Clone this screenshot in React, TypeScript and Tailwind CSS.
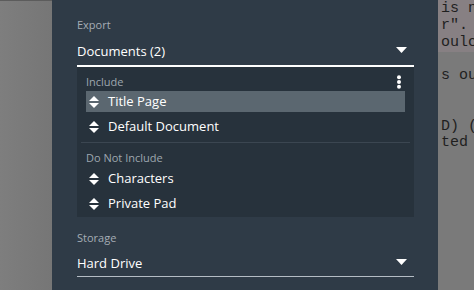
import React from "react";

const include = ["Title Page", "Default Document"];
const exclude = ["Characters", "Private Pad"];

const editorLines = ["is n", "r\".", "oulc", "", "s ou", "", "", "D) (", "ted"];

function SortIcon() {
  return (
    <svg width="10" height="12" viewBox="0 0 10 12" className="shrink-0">
      <path d="M5 0 L10 5 L0 5 Z" fill="#ffffff" />
      <path d="M0 7 L10 7 L5 12 Z" fill="#ffffff" />
    </svg>
  );
}

function Caret() {
  return (
    <svg width="11" height="6" viewBox="0 0 11 6">
      <path d="M0 0 L11 0 L5.5 6 Z" fill="#ffffff" />
    </svg>
  );
}

function DocRow({ name, active }: { name: string; active?: boolean }) {
  return (
    <div
      className={`flex items-center h-[21px] pl-[3px] gap-[9px] ${
        active ? "bg-[#5b6770]" : ""
      }`}
    >
      <SortIcon />
      <span className="text-[13px] text-white">{name}</span>
    </div>
  );
}

export default function App() {
  return (
    <div
      className="flex w-[474px] h-[290px] overflow-hidden bg-[#7b7b7b]"
      style={{ fontFamily: "'Open Sans', sans-serif" }}
    >
      {/* dimmed page behind */}
      <div className="w-[52px] shrink-0 bg-gradient-to-r from-[#7e7e7e] to-[#767676] border-t border-[#5c5c5c]" />

      {/* export panel */}
      <div className="w-[386px] shrink-0 bg-[#2f3b47] pl-[25px] pr-[24px] pt-[16px]">
        <div className="text-[11px] text-[#a5adb5] leading-[18px]">Export</div>
        <div className="flex items-center justify-between h-[33px] border-b-2 border-white pr-[7px]">
          <span className="text-[13px] text-white pt-[4px]">Documents (2)</span>
          <Caret />
        </div>

        <div className="bg-[#27323c] px-[9px] pb-[3px]">
          <div className="flex items-center justify-between h-[24px] pt-[6px]">
            <span className="text-[11px] text-[#9ea7af]">Include</span>
            <svg width="6" height="14" viewBox="0 0 6 14" className="mr-[3px]">
              <circle cx="3" cy="2.2" r="2" fill="#ffffff" />
              <circle cx="3" cy="7" r="2" fill="#ffffff" />
              <circle cx="3" cy="11.8" r="2" fill="#ffffff" />
            </svg>
          </div>
          <div className="flex flex-col gap-[4px]">
            {include.map((d, i) => (
              <DocRow key={d} name={d} active={i === 0} />
            ))}
          </div>
          <div className="mx-[-5px] mt-[5px] border-t border-[#3b4651]" />
          <div className="text-[11px] text-[#9ea7af] h-[25px] flex items-center pt-[5px]">
            Do Not Include
          </div>
          <div className="flex flex-col gap-[4px]">
            {exclude.map((d) => (
              <DocRow key={d} name={d} />
            ))}
          </div>
        </div>

        <div className="text-[11px] text-[#a5adb5] leading-[18px] mt-[12px]">Storage</div>
        <div className="flex items-center justify-between h-[30px] border-b border-[#b4bcc4] pr-[7px]">
          <span className="text-[13px] text-white pt-[4px]">Hard Drive</span>
          <Caret />
        </div>
      </div>

      {/* editor text peeking on the right */}
      <div className="flex-1 overflow-hidden bg-[#7a7a7a] relative">
        <div className="h-[52px] bg-[#878083]" />
        <div
          className="absolute top-[1px] left-[3px] whitespace-pre text-[15px] leading-[16.8px] text-[#1f1f1f]"
          style={{ fontFamily: "'Liberation Mono', monospace" }}
        >
          {editorLines.map((l, i) => (
            <div key={i} className="h-[16.8px]">
              {l}
            </div>
          ))}
        </div>
      </div>
    </div>
  );
}
